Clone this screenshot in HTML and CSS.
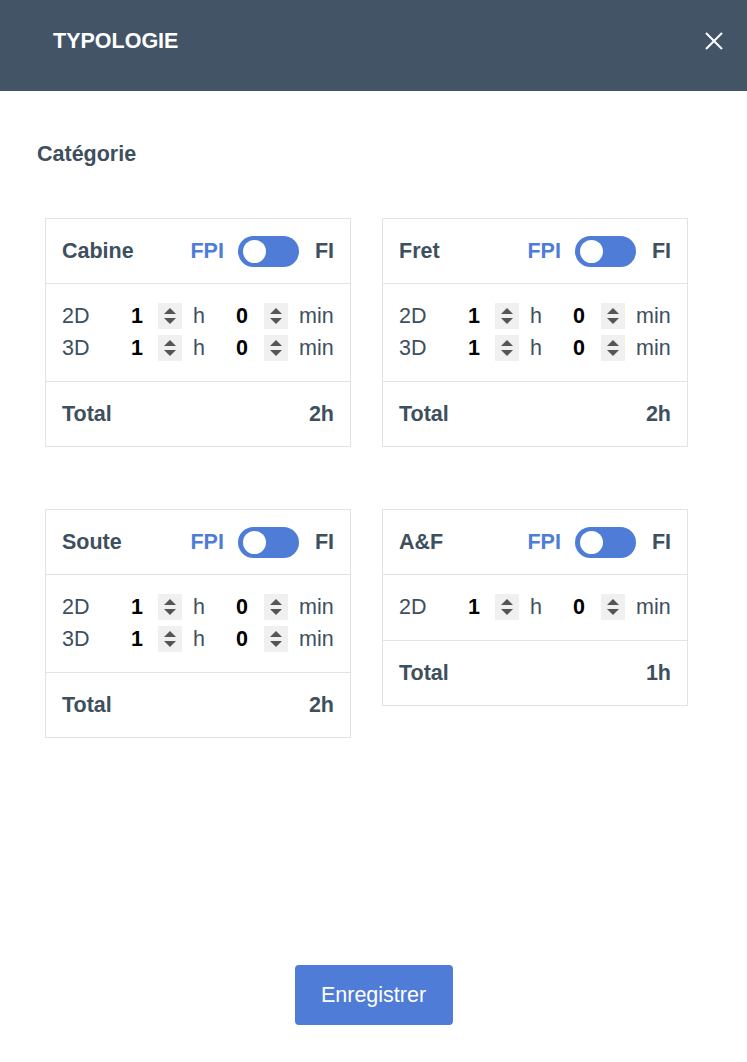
FILE: index.html
```html
<!DOCTYPE html>
<html lang="fr">
<head>
  <meta charset="UTF-8">
  <title>Typologie</title>
  <link rel="stylesheet" href="styles.css">
</head>
<body>

  <div class="modal-head">
    <span class="modal-title">TYPOLOGIE</span>
    <svg class="close" width="18" height="18" viewBox="0 0 18 18">
      <path d="M1 1 L17 17 M17 1 L1 17" stroke="#fff" stroke-width="2" fill="none"/>
    </svg>
  </div>

  <div class="modal-body">
    <div class="section-title">Catégorie</div>

    <div class="cards">

      <!-- Cabine -->
      <div class="card">
        <div class="card-head">
          <span class="card-name">Cabine</span>
          <span class="fpi">FPI</span>
          <span class="toggle"><span class="knob"></span></span>
          <span class="fi">FI</span>
        </div>
        <div class="card-rows">
          <div class="row">
            <span class="lbl">2D</span><span class="val">1</span><span class="spin"><i class="up"></i><i class="down"></i></span>
            <span class="unit-h">h</span><span class="val val2">0</span><span class="spin"><i class="up"></i><i class="down"></i></span>
            <span class="unit-min">min</span>
          </div>
          <div class="row">
            <span class="lbl">3D</span><span class="val">1</span><span class="spin"><i class="up"></i><i class="down"></i></span>
            <span class="unit-h">h</span><span class="val val2">0</span><span class="spin"><i class="up"></i><i class="down"></i></span>
            <span class="unit-min">min</span>
          </div>
        </div>
        <div class="card-foot"><span>Total</span><span>2h</span></div>
      </div>

      <!-- Fret -->
      <div class="card">
        <div class="card-head">
          <span class="card-name">Fret</span>
          <span class="fpi">FPI</span>
          <span class="toggle"><span class="knob"></span></span>
          <span class="fi">FI</span>
        </div>
        <div class="card-rows">
          <div class="row">
            <span class="lbl">2D</span><span class="val">1</span><span class="spin"><i class="up"></i><i class="down"></i></span>
            <span class="unit-h">h</span><span class="val val2">0</span><span class="spin"><i class="up"></i><i class="down"></i></span>
            <span class="unit-min">min</span>
          </div>
          <div class="row">
            <span class="lbl">3D</span><span class="val">1</span><span class="spin"><i class="up"></i><i class="down"></i></span>
            <span class="unit-h">h</span><span class="val val2">0</span><span class="spin"><i class="up"></i><i class="down"></i></span>
            <span class="unit-min">min</span>
          </div>
        </div>
        <div class="card-foot"><span>Total</span><span>2h</span></div>
      </div>

      <!-- Soute -->
      <div class="card">
        <div class="card-head">
          <span class="card-name">Soute</span>
          <span class="fpi">FPI</span>
          <span class="toggle"><span class="knob"></span></span>
          <span class="fi">FI</span>
        </div>
        <div class="card-rows">
          <div class="row">
            <span class="lbl">2D</span><span class="val">1</span><span class="spin"><i class="up"></i><i class="down"></i></span>
            <span class="unit-h">h</span><span class="val val2">0</span><span class="spin"><i class="up"></i><i class="down"></i></span>
            <span class="unit-min">min</span>
          </div>
          <div class="row">
            <span class="lbl">3D</span><span class="val">1</span><span class="spin"><i class="up"></i><i class="down"></i></span>
            <span class="unit-h">h</span><span class="val val2">0</span><span class="spin"><i class="up"></i><i class="down"></i></span>
            <span class="unit-min">min</span>
          </div>
        </div>
        <div class="card-foot"><span>Total</span><span>2h</span></div>
      </div>

      <!-- A&F -->
      <div class="card">
        <div class="card-head">
          <span class="card-name">A&amp;F</span>
          <span class="fpi">FPI</span>
          <span class="toggle"><span class="knob"></span></span>
          <span class="fi">FI</span>
        </div>
        <div class="card-rows">
          <div class="row">
            <span class="lbl">2D</span><span class="val">1</span><span class="spin"><i class="up"></i><i class="down"></i></span>
            <span class="unit-h">h</span><span class="val val2">0</span><span class="spin"><i class="up"></i><i class="down"></i></span>
            <span class="unit-min">min</span>
          </div>
        </div>
        <div class="card-foot"><span>Total</span><span>1h</span></div>
      </div>

    </div>
  </div>

  <div class="actions">
    <button class="save">Enregistrer</button>
  </div>

</body>
</html>
```

FILE: styles.css
```css
body { margin: 0; font-family: "Liberation Sans", Arial, sans-serif; font-size: 21.5px; color: #3e4f5e; background: #fff; }

.modal-head { height: 91px; box-sizing: border-box; background: #425466; padding: 28px 24px 0 53px; display: flex; justify-content: space-between; align-items: flex-start; }
.modal-title { color: #fff; font-weight: bold; line-height: 26px; }
.close { margin-top: 4px; }

.modal-body { padding: 50px 0 0 37px; }
.section-title { font-weight: bold; line-height: 26px; }

.cards { display: grid; grid-template-columns: 306px 306px; column-gap: 31px; row-gap: 62px; align-items: start; margin: 51px 0 0 8px; }

.card { border: 1px solid #e3e3e3; }
.card-head { height: 64px; display: flex; align-items: center; padding: 0 16px; border-bottom: 1px solid #e3e3e3; font-weight: bold; }
.card-name { flex: 1; }
.fpi { color: #4f7cd7; }
.toggle { width: 61px; height: 31px; border-radius: 16px; background: #4f7cd7; margin: 0 16px 0 14px; display: flex; align-items: center; }
.knob { width: 23px; height: 23px; border-radius: 50%; background: #fff; margin-left: 5px; }

.card-rows { padding: 16px 16px 17px; border-bottom: 1px solid #e3e3e3; }
.row { display: flex; align-items: center; height: 32px; }
.lbl { width: 69px; }
.val { width: 27px; color: #000; font-weight: bold; }
.val2 { width: 28px; }
.spin { width: 24px; height: 26px; background: #f0f0f0; display: flex; flex-direction: column; align-items: center; justify-content: center; gap: 4px; }
.spin i { display: block; width: 0; height: 0; border-left: 6px solid transparent; border-right: 6px solid transparent; }
.spin .up { border-bottom: 6px solid #555; }
.spin .down { border-top: 6px solid #555; }
.unit-h { width: 32px; margin-left: 11px; padding-right: 11px; }
.unit-min { margin-left: 11px; }

.card-foot { height: 64px; display: flex; align-items: center; justify-content: space-between; padding: 0 16px; font-weight: bold; }

.actions { display: flex; justify-content: center; margin-top: 227px; }
.save { width: 158px; height: 60px; border: none; border-radius: 4px; background: #4f7cd7; color: #fff; font-family: "Liberation Sans", Arial, sans-serif; font-size: 21.5px; cursor: pointer; }
```
